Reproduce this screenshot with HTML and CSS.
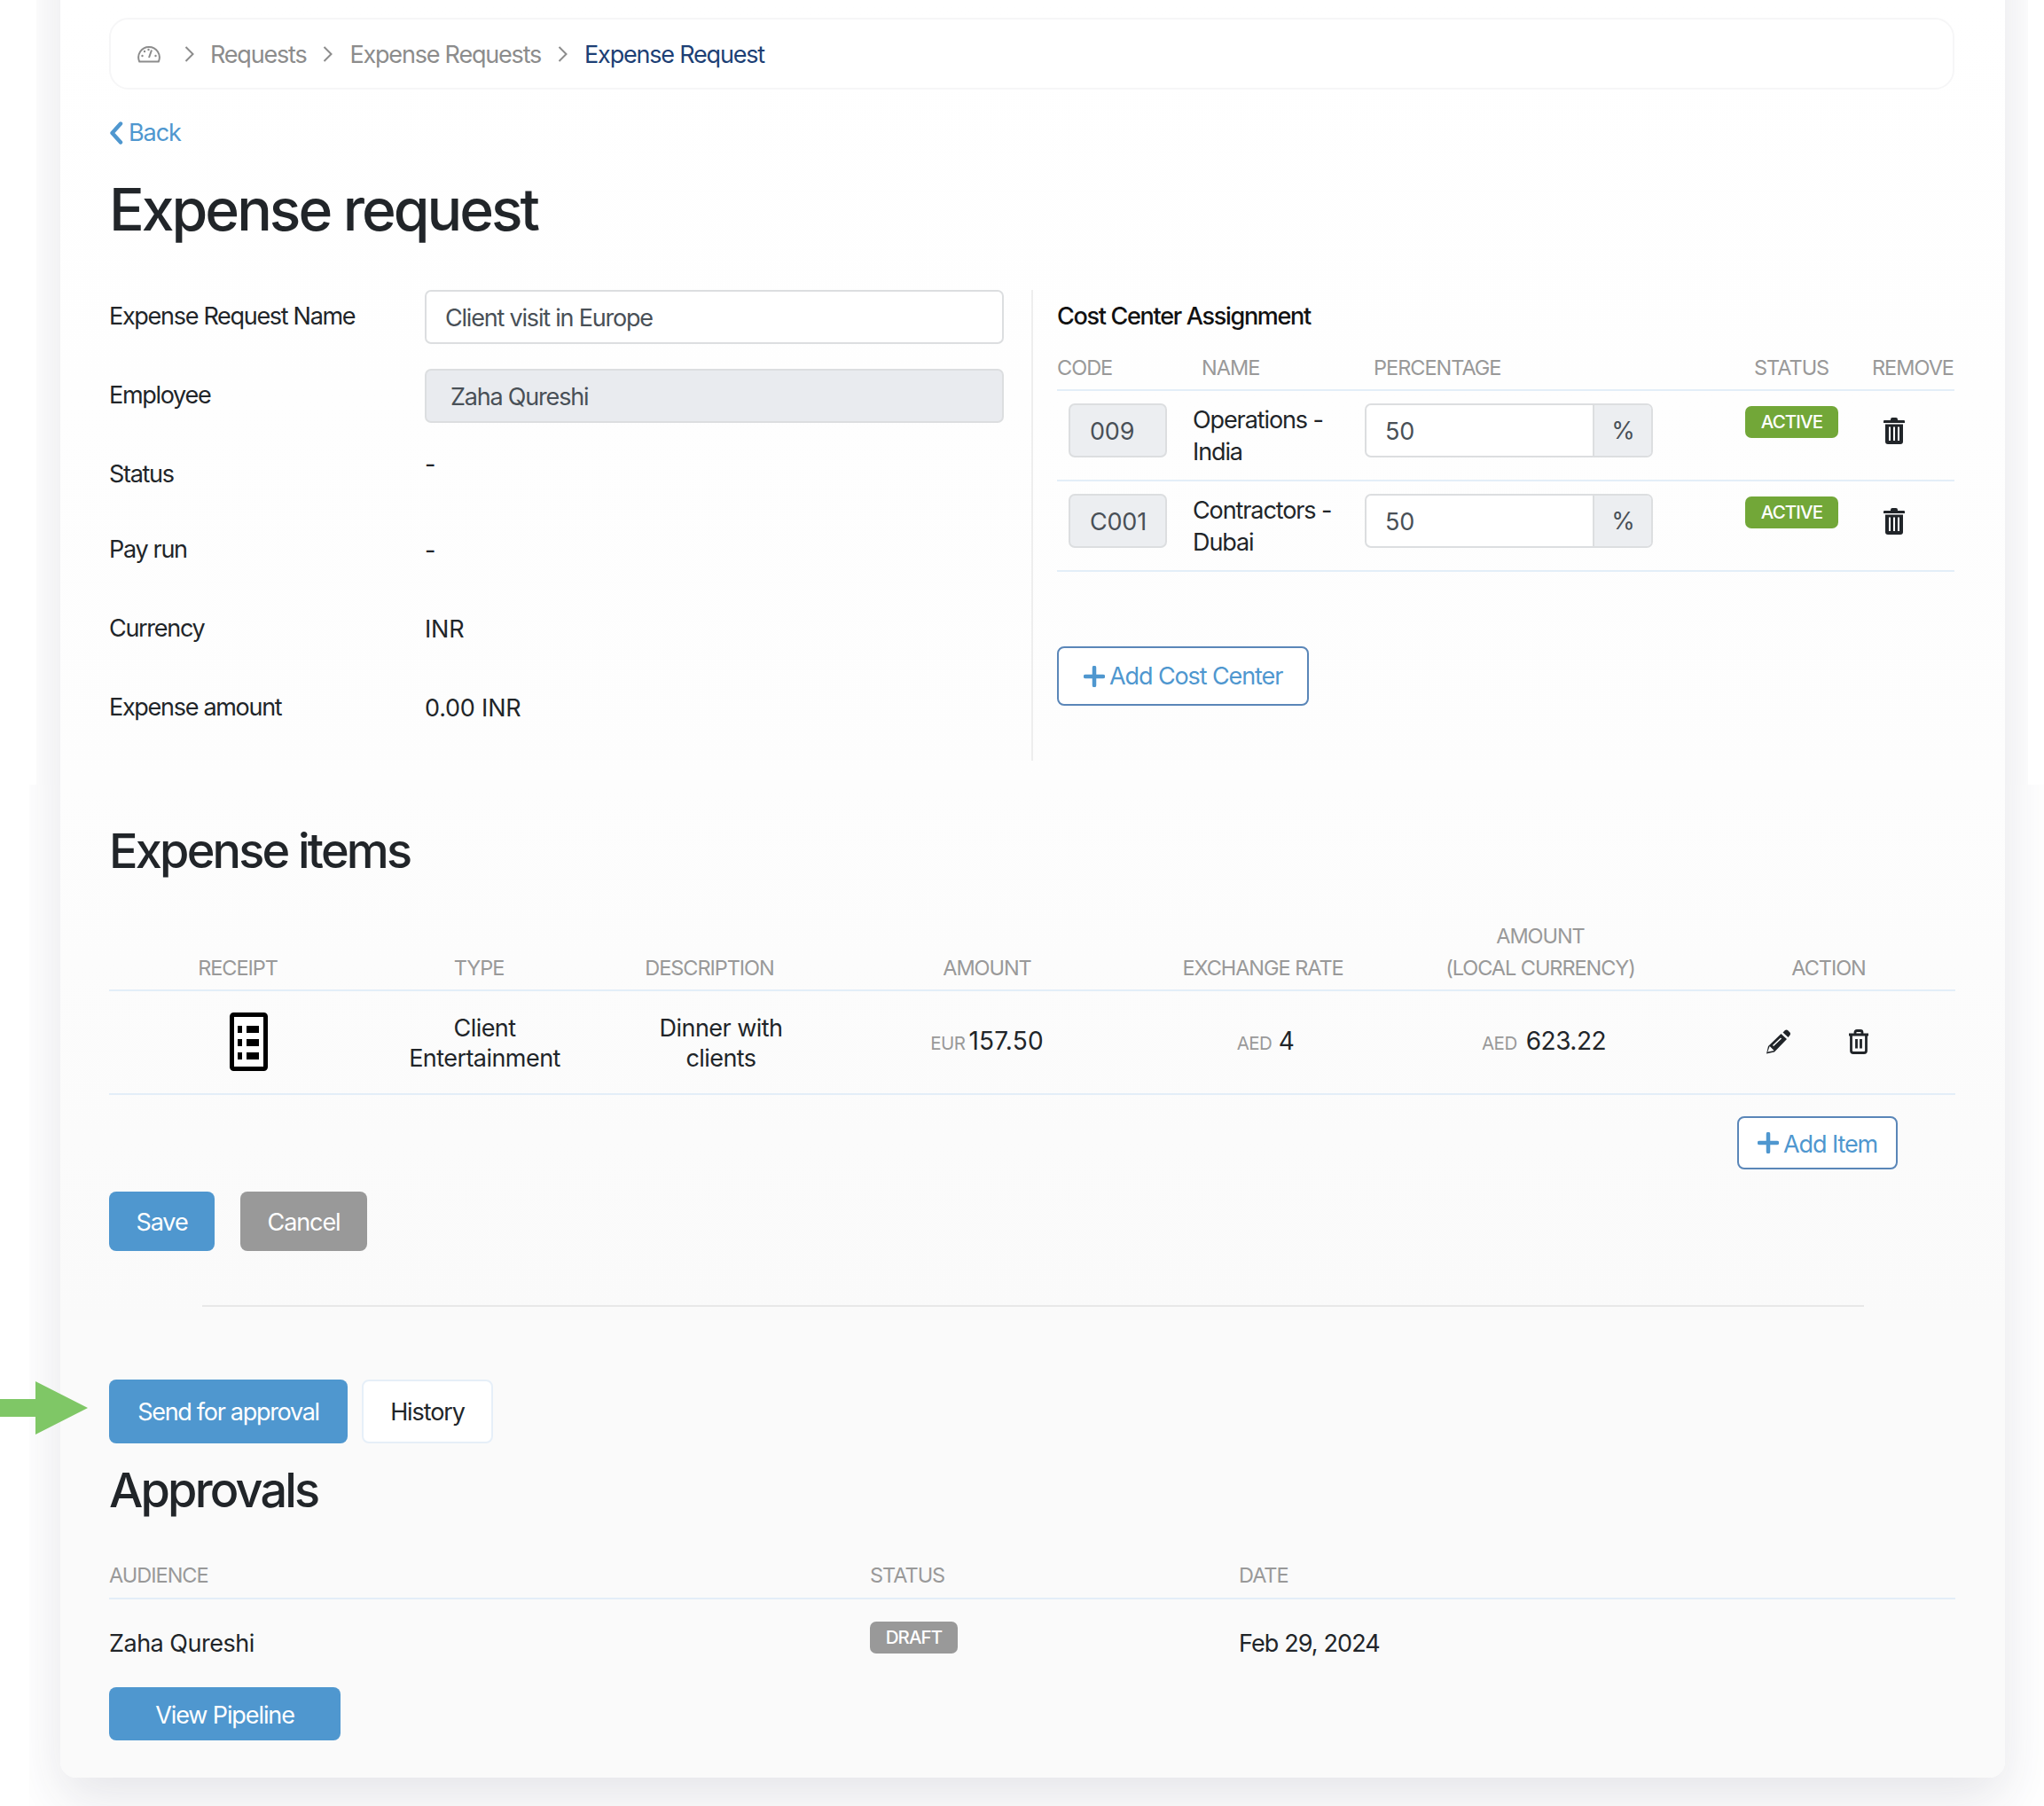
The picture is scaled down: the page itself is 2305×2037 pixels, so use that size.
FILE: index.html
```html
<!DOCTYPE html>
<html lang="en">
<head>
<meta charset="utf-8">
<title>Expense request</title>
<link rel="stylesheet" href="styles.css">
</head>
<body>
<div class="shell shell-top">
  <section class="card card-top">
    <nav class="crumbs">
      <svg class="gauge" viewBox="0 0 26 20" width="26" height="20"><path d="M2.2 18.500 A11.8 11.8 0 1 1 23.800 18.500 Z" fill="none" stroke="#8c8c8c" stroke-width="2" stroke-linejoin="round"/><path d="M13 14 L16 5.500" stroke="#8c8c8c" stroke-width="2"/><circle cx="5.500" cy="12" r="1.200" fill="#8c8c8c"/><circle cx="8" cy="7" r="1.200" fill="#8c8c8c"/><circle cx="12.500" cy="5" r="1.200" fill="#8c8c8c"/><circle cx="20.500" cy="12" r="1.200" fill="#8c8c8c"/></svg>
      <svg class="chev chev-first" viewBox="0 0 11 18" width="11" height="18"><path d="M1.500 1 L9.500 9 L1.500 17" fill="none" stroke="#8c8c8c" stroke-width="2"/></svg>
      <span class="crumb">Requests</span>
      <svg class="chev" viewBox="0 0 11 18" width="11" height="18"><path d="M1.500 1 L9.500 9 L1.500 17" fill="none" stroke="#8c8c8c" stroke-width="2"/></svg>
      <span class="crumb">Expense Requests</span>
      <svg class="chev" viewBox="0 0 11 18" width="11" height="18"><path d="M1.500 1 L9.500 9 L1.500 17" fill="none" stroke="#8c8c8c" stroke-width="2"/></svg>
      <span class="crumb crumb-active">Expense Request</span>
    </nav>
    <a class="back" href="#"><svg viewBox="0 0 16 26" width="16" height="26"><path d="M13 2.500 L3.500 13 L13 23.500" fill="none" stroke="#4f97cf" stroke-width="4.400" stroke-linecap="round" stroke-linejoin="round"/></svg>Back</a>
    <h1 class="title">Expense request</h1>
    <div class="columns">
      <div class="form">
        <div class="form-row"><span class="label">Expense Request Name</span><div class="input">Client visit in Europe</div></div>
        <div class="form-row"><span class="label">Employee</span><div class="input input-disabled">Zaha Qureshi</div></div>
        <div class="form-row form-row-status"><span class="label">Status</span><span class="value value-raised">-</span></div>
        <div class="form-row"><span class="label">Pay run</span><span class="value">-</span></div>
        <div class="form-row"><span class="label">Currency</span><span class="value num">INR</span></div>
        <div class="form-row form-row-last"><span class="label">Expense amount</span><span class="value num">0.00 INR</span></div>
      </div>
      <div class="cost">
        <h2 class="cost-title">Cost Center Assignment</h2>
        <table class="cost-table">
          <colgroup><col class="cc-1"><col class="cc-2"><col class="cc-3"><col class="cc-4"><col class="cc-5"></colgroup>
          <thead><tr><th class="flush">CODE</th><th>NAME</th><th>PERCENTAGE</th><th>STATUS</th><th class="flush">REMOVE</th></tr></thead>
          <tbody>
            <tr>
              <td><div class="code-box num">009</div></td>
              <td class="name-cell">Operations - India</td>
              <td><div class="pct"><div class="pct-value num">50</div><div class="pct-unit">%</div></div></td>
              <td><span class="badge badge-active">ACTIVE</span></td>
              <td><svg class="trash-solid" viewBox="0 0 24 30" width="24" height="30"><use href="#trash-solid"/></svg></td>
            </tr>
            <tr>
              <td><div class="code-box num">C001</div></td>
              <td class="name-cell">Contractors - Dubai</td>
              <td><div class="pct"><div class="pct-value num">50</div><div class="pct-unit">%</div></div></td>
              <td><span class="badge badge-active">ACTIVE</span></td>
              <td><svg class="trash-solid" viewBox="0 0 24 30" width="24" height="30"><use href="#trash-solid"/></svg></td>
            </tr>
          </tbody>
        </table>
        <button class="btn-outline btn-add-cost"><svg viewBox="0 0 24 24" width="24" height="24"><path d="M12 2 V22 M2 12 H22" stroke="#4f97cf" stroke-width="4.500" stroke-linecap="round"/></svg>Add Cost Center</button>
      </div>
    </div>
  </section>
</div>
<div class="shell shell-bottom">
  <section class="card card-bottom">
    <h2 class="heading heading-items">Expense items</h2>
    <table class="items-table">
      <colgroup><col class="ic-1"><col class="ic-2"><col class="ic-3"><col class="ic-4"><col class="ic-5"><col class="ic-6"><col class="ic-7"></colgroup>
      <thead><tr><th>RECEIPT</th><th>TYPE</th><th>DESCRIPTION</th><th>AMOUNT</th><th>EXCHANGE RATE</th><th>AMOUNT<br>(LOCAL CURRENCY)</th><th>ACTION</th></tr></thead>
      <tbody>
        <tr>
          <td class="shift-12"><svg class="receipt" viewBox="0 0 43 66" width="43" height="66"><rect x="2.500" y="2.500" width="38" height="61" rx="2" fill="#fff" stroke="#000" stroke-width="5"/><path d="M9 15 h5 v8 h-5z M19 15 h14 v8 h-14z M9 30 h5 v8 h-5z M19 30 h14 v8 h-14z M9 45 h5 v8 h-5z M19 45 h14 v8 h-14z" fill="#000"/></svg></td>
          <td class="shift-5">Client Entertainment</td>
          <td class="shift-13">Dinner with clients</td>
          <td class="money money-eur"><span class="cur cur-eur">EUR</span>157.50</td>
          <td class="money shift-3"><span class="cur">AED</span> 4</td>
          <td class="money shift-4"><span class="cur cur-local">AED</span>623.22</td>
          <td>
            <div class="actions">
              <svg viewBox="0 0 28 28" width="28" height="28"><path d="M1 27.500 L3 19 L17.500 5 L24 11 L10 25.500 Z M19.500 3.500 L22 1 Q23.500 0 25 1 L27.500 3.500 Q28.500 5 27.500 6.500 L25.500 9 Z" fill="#212529"/><path d="M8.500 18.500 L17.500 10 M3.500 24.500 L5 20.500 L8 23.500 Z" stroke="#fff" stroke-width="1.600" fill="#fff"/></svg>
              <svg viewBox="0 0 24 28" width="24" height="28"><path d="M1 6 H23 M8 5.500 V3.500 Q8 1.500 10 1.500 H14 Q16 1.500 16 3.500 V5.500 M3.500 6 V24 Q3.500 26.500 6 26.500 H18 Q20.500 26.500 20.500 24 V6 M9.500 11 V21.500 M14.500 11 V21.500" fill="none" stroke="#212529" stroke-width="2.800"/></svg>
            </div>
          </td>
        </tr>
      </tbody>
    </table>
    <div class="add-item-row"><button class="btn-outline btn-add-item"><svg viewBox="0 0 24 24" width="24" height="24"><path d="M12 2 V22 M2 12 H22" stroke="#4f97cf" stroke-width="4.500" stroke-linecap="round"/></svg><span class="btn-label">Add Item</span></button></div>
    <div class="form-actions"><button class="btn btn-primary btn-save">Save</button><button class="btn btn-gray btn-cancel">Cancel</button></div>
    <hr class="rule">
    <div class="approval-actions"><button class="btn btn-primary btn-send">Send for approval</button><button class="btn btn-history">History</button></div>
    <h2 class="heading heading-approvals">Approvals</h2>
    <div class="approvals">
      <div class="ap-head">AUDIENCE</div><div class="ap-head">STATUS</div><div class="ap-head">DATE</div>
      <div class="ap-cell">Zaha Qureshi</div><div class="ap-cell ap-status"><span class="badge badge-draft">DRAFT</span></div><div class="ap-cell ap-date">Feb 29, 2024</div>
    </div>
    <button class="btn btn-primary btn-pipeline">View Pipeline</button>
  </section>
</div>
<svg class="arrow" viewBox="0 0 100 60" width="100" height="60"><path d="M0 20 H40 V0 L99 30 L40 60 V40 H0 Z" fill="#7fc766"/></svg>
<svg class="defs" width="0" height="0"><defs><g id="trash-solid"><path d="M8 2 Q8 0 10 0 H14 Q16 0 16 2 L16 3 H23 Q24 3 24 4 V6 H0 V4 Q0 3 1 3 H8 Z" fill="#212529"/><path d="M2 7.500 H22 V27 Q22 30 19 30 H5 Q2 30 2 27 Z" fill="#212529"/><path d="M6 10.500 h2 v15.500 h-2z M11 10.500 h2 v15.500 h-2z M16 10.500 h2 v15.500 h-2z" fill="#fff"/></g></defs></svg>
</body>
</html>
```
FILE: styles.css
```css
* { box-sizing: border-box; }
html, body { margin: 0; padding: 0; background: #fff; }
body {
  position: relative;
  width: 2305px;
  height: 2037px;
  overflow: hidden;
  font-family: Inter, "Liberation Sans", sans-serif;
  font-size: 27px;
  letter-spacing: -1.1px;
  color: #212529;
  line-height: 35.6px;
}
.num { letter-spacing: -0.2px; }
.shell { overflow: hidden; }
.shell-top { margin-left: 41px; padding-left: 27px; height: 885px; width: 2246px; }
.shell-bottom { margin-left: 33px; padding-left: 35px; height: 1152px; width: 2272px; }
.card { width: 2193px; }
.card-top {
  height: 1085px;
  margin-top: -100px;
  padding: 121px 57px 0 55px;
  background: linear-gradient(180deg, #fff 100px, #fdfdfd 985px);
  box-shadow: 0 24px 60px rgba(40, 40, 70, 0.12);
}
.card-bottom {
  height: 1220px;
  margin-top: -100px;
  padding: 145px 57px 0 55px;
  background: linear-gradient(180deg, #fdfdfd 100px, #fafafa 700px);
  border-radius: 0 0 18px 18px;
  box-shadow: 0 24px 60px rgba(40, 40, 70, 0.12);
}

.crumbs {
  height: 81px;
  margin-top: -1px;
  border: 2px solid #f6f6f7;
  border-radius: 22px;
  padding: 0 0 0 30px;
  display: flex;
  align-items: center;
  background: #fff;
}
.gauge { margin-right: 27px; }
.chev { margin: 0 19px 0 19px; }
.chev-first { margin: 0 18px 0 0; }
.crumb { color: #8c8c8c; padding-top: 3px; letter-spacing: -1.2px; }
.crumb-active { color: #1d3f75; }

.back { display: flex; align-items: center; gap: 6px; margin-top: 31.5px; height: 34px; color: #4f97cf; text-decoration: none; }
.title { margin: 29.5px 0 0; font-size: 66px; line-height: 80px; font-weight: 500; letter-spacing: -3px; }

.columns { display: flex; margin-top: 50.5px; }
.form { width: 1040px; }
.form-row { display: grid; grid-template-columns: 356px 653px; align-items: center; height: 60px; margin-bottom: 29px; }
.form-row-status { margin-bottom: 25px; }
.form-row-last { margin-bottom: 0; }
.label { letter-spacing: -1.3px; }
.value { padding-top: 3px; }
.value-raised { position: relative; top: -12px; }
.input {
  height: 61px;
  border: 2px solid #dcdee0;
  border-radius: 7px;
  padding: 3px 0 0 21px;
  background: #fff;
  color: #495057;
  display: flex;
  align-items: center;
  letter-spacing: -1.2px;
}
.input-disabled { background: #e9ebef; padding-left: 27px; }

.cost { width: 1041px; height: 531px; border-left: 2px solid #eeeeee; padding-left: 27px; }
.cost-title { margin: 0; font-size: 27px; font-weight: 500; line-height: 60px; color: #111; letter-spacing: -1.3px; }
.cost-table { width: 1012px; table-layout: fixed; border-collapse: collapse; margin-top: 13.5px; }
.cc-1 { width: 153px; } .cc-2 { width: 194px; } .cc-3 { width: 429px; } .cc-4 { width: 143px; } .cc-5 { width: 93px; }
.cost-table th {
  text-align: left;
  font-size: 23.5px;
  font-weight: 400;
  letter-spacing: -1px;
  color: #999;
  height: 39.5px;
  padding: 0 0 9.5px 10px;
  border-bottom: 2px solid #e3eef8;
  white-space: nowrap;
  line-height: 28px;
}
.cost-table th.flush { padding-left: 0; }
.cost-table td { height: 102px; vertical-align: top; padding: 14px 0 0; border-bottom: 2px solid #e3eef8; }
.code-box {
  margin-left: 13px;
  width: 111px;
  height: 61px;
  background: #eceef1;
  border: 2px solid #dcdee0;
  border-radius: 7px;
  color: #495057;
  padding: 3px 0 0 22px;
  display: flex;
  align-items: center;
}
.cost-table td.name-cell { padding: 15.5px 24px 0 0; }
.pct { width: 325px; height: 61px; display: flex; border: 2px solid #dcdee0; border-radius: 7px; overflow: hidden; background: #fff; color: #495057; }
.pct-value { flex: 1; padding: 3px 0 0 21px; display: flex; align-items: center; }
.pct-unit { width: 66px; background: #eceef1; border-left: 2px solid #dcdee0; padding-top: 2px; display: flex; align-items: center; justify-content: center; }
.badge {
  display: inline-flex;
  align-items: center;
  justify-content: center;
  height: 36px;
  border-radius: 7px;
  color: #fff;
  font-size: 20.5px;
  font-weight: 500;
  letter-spacing: -0.9px;
  line-height: 36px;
}
.badge-active { width: 105px; background: #72a738; margin-top: 3px; vertical-align: top; }
.badge-draft { width: 99px; background: #999; }
.trash-solid { display: block; margin: 16px 0 0 13px; }

.btn-outline {
  display: inline-flex;
  align-items: center;
  border: 2px solid #5a86b8;
  border-radius: 8px;
  background: #fff;
  color: #4f97cf;
  font: inherit;
  letter-spacing: inherit;
  padding: 0;
}
.btn-add-cost { width: 284px; height: 67px; margin-top: 84.5px; padding-left: 28px; gap: 5px; }
.add-item-row { display: flex; justify-content: flex-end; padding-right: 64px; margin-top: 24.5px; }
.btn-add-item { width: 181px; height: 60px; padding-left: 21px; gap: 5px; }
.btn-label { padding-top: 3px; }

.heading { margin: 0; font-weight: 500; line-height: 60px; font-size: 54px; letter-spacing: -2.8px; }

.items-table { width: 2082px; table-layout: fixed; border-collapse: collapse; margin-top: 47.5px; }
.ic-1 { width: 290px; } .ic-2 { width: 254px; } .ic-3 { width: 266px; } .ic-4 { width: 360px; } .ic-5 { width: 262px; } .ic-6 { width: 364px; } .ic-7 { width: 286px; }
.items-table th {
  font-size: 23.5px;
  font-weight: 400;
  letter-spacing: -1.05px;
  color: #999;
  line-height: 36px;
  padding: 0 0 6px;
  vertical-align: bottom;
  border-bottom: 2px solid #e3eef8;
  white-space: nowrap;
}
.items-table td { height: 117px; text-align: center; vertical-align: middle; border-bottom: 2px solid #e3eef8; padding: 0 20px; line-height: 34px; letter-spacing: -0.55px; }
.items-table td.shift-12 { padding-left: 44px; padding-right: 20px; }
.items-table td.shift-5 { padding: 3px 20px 0 33px; }
.items-table td.shift-13 { padding: 3px 20px 0 46px; }
.items-table td.shift-3 { padding: 1px 20px 0 26px; }
.items-table td.shift-4 { padding: 1px 20px 0 28px; }
.receipt { display: block; margin: 0 auto; }
.items-table td.money { font-size: 28px; white-space: nowrap; letter-spacing: -0.5px; }
.items-table td.money-eur { padding-top: 1px; letter-spacing: 0.2px; }
.cur { font-size: 20.5px; color: #999; letter-spacing: -0.5px; }
.cur-eur { margin-right: 4px; }
.cur-local { margin-right: 10px; }
.actions { display: flex; justify-content: center; align-items: center; gap: 65px; margin-left: -25px; }

.form-actions { display: flex; gap: 29px; margin-top: 25px; }
.btn {
  border: 0;
  border-radius: 8px;
  font: inherit;
  letter-spacing: inherit;
  color: #fff;
  padding: 3px 0 0;
}
.btn-primary { background: #4f97cf; }
.btn-gray { background: #999; }
.btn-save { width: 119px; height: 67px; }
.btn-cancel { width: 143px; height: 67px; }
.rule { margin: 61px 102px 0 105px; border: 0; border-top: 2px solid #e8e8e8; }
.approval-actions { display: flex; gap: 16px; margin-top: 81.5px; }
.btn-send { width: 269px; height: 72px; letter-spacing: -1.3px; }
.btn-history { width: 148px; height: 72px; background: #fff; border: 2px solid #e6eff8; color: #212529; }
.heading-approvals { margin-top: 23.5px; }

.approvals { display: grid; grid-template-columns: 858px 416px 808px; margin-top: 51.5px; }
.ap-head { font-size: 23.5px; letter-spacing: -1px; color: #999; height: 41.5px; line-height: 28px; border-bottom: 2px solid #e3eef8; }
.ap-cell { height: 99px; padding-top: 31.5px; line-height: 36px; letter-spacing: -0.5px; }
.ap-date { letter-spacing: -0.9px; }
.ap-status { padding-top: 24.5px; line-height: 0; }
.btn-pipeline { width: 261px; height: 60px; }

.arrow { position: absolute; left: 0; top: 1558px; }
.defs { position: absolute; }
```
